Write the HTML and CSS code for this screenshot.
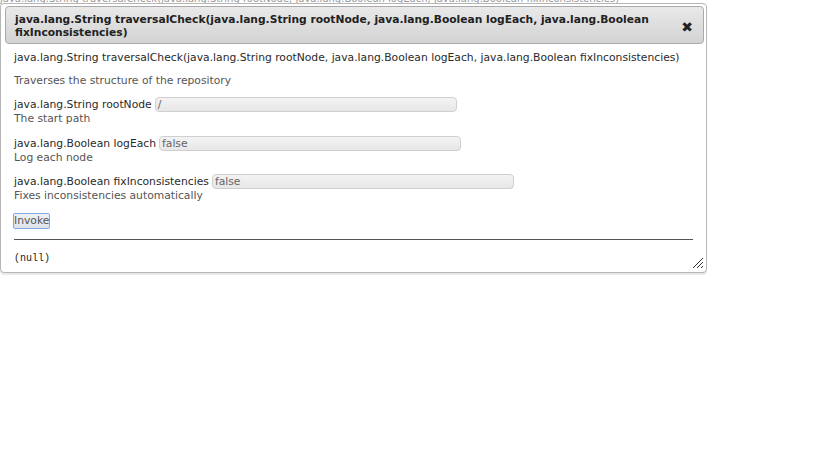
FILE: index.html
```html
<!DOCTYPE html>
<html>
<head>
<meta charset="utf-8">
<link rel="stylesheet" href="styles.css">
</head>
<body>
<p class="behind">java.lang.String traversalCheck(java.lang.String rootNode, java.lang.Boolean logEach, java.lang.Boolean fixInconsistencies)</p>
<div class="dialog">
  <div class="titlebar">
    <span class="title">java.lang.String traversalCheck(java.lang.String rootNode, java.lang.Boolean logEach, java.lang.Boolean fixInconsistencies)</span>
    <span class="close">&#x2716;</span>
  </div>
  <div class="content">
    <div class="line">java.lang.String traversalCheck(java.lang.String rootNode, java.lang.Boolean logEach, java.lang.Boolean fixInconsistencies)</div>
    <div class="line desc">Traverses the structure of the repository</div>
    <div class="param">
      <div class="prow">java.lang.String rootNode <span class="field">/</span></div>
      <div class="line desc">The start path</div>
    </div>
    <div class="param">
      <div class="prow">java.lang.Boolean logEach <span class="field">false</span></div>
      <div class="line desc">Log each node</div>
    </div>
    <div class="param last">
      <div class="prow">java.lang.Boolean fixInconsistencies <span class="field">false</span></div>
      <div class="line desc">Fixes inconsistencies automatically</div>
    </div>
    <div class="btnrow"><span class="btn">Invoke</span></div>
    <div class="rule"></div>
    <div class="result">(null)</div>
  </div>
  <svg class="grip" width="12" height="12" viewBox="0 0 12 12"><path d="M11 1 L1 11 M11 5 L5 11 M11 9 L9 11" stroke="#333" stroke-width="1" fill="none"/></svg>
</div>
</body>
</html>
```
FILE: styles.css
```css
html, body {
  margin: 0;
  padding: 0;
  background: #fff;
  overflow: hidden;
}
body {
  font-family: "DejaVu Sans", Verdana, sans-serif;
  position: relative;
  width: 819px;
  height: 460px;
}
.behind {
  margin: -6px 0 0 0;
  font-size: 10px;
  line-height: 10px;
  color: #999;
  white-space: nowrap;
}
.dialog {
  position: absolute;
  left: 0;
  top: 3px;
  width: 699px;
  height: 264px;
  border: 1px solid #b5b5b5;
  border-radius: 4px;
  background: #fff;
  padding: 2px 2px 2px 4px;
  box-shadow: 0 2px 0 #e9e9e9;
}
.titlebar {
  display: flex;
  align-items: center;
  justify-content: space-between;
  border: 1px solid #aaa;
  border-radius: 4px;
  background: linear-gradient(#e9e9e9, #d3d3d3);
  padding: 6px 10px 4px 9px;
  height: 26px;
  box-sizing: content-box;
}
.title {
  font-weight: bold;
  font-size: 10.7px;
  line-height: 13px;
  color: #222;
  width: 655px;
}
.close {
  font-size: 14px;
  color: #222;
  margin-top: 2px;
}
.content {
  display: flex;
  flex-direction: column;
  gap: 10px;
  padding: 7px 9px 0 9px;
  font-size: 10.75px;
  color: #2a2a2a;
}
.line {
  line-height: 14px;
  white-space: nowrap;
}
.content > .desc {
  margin-top: -1px;
  margin-bottom: -1px;
}
.desc {
  color: #555;
}
.param {
  display: flex;
  flex-direction: column;
}
.param.last {
  margin-top: -1px;
}
.prow {
  line-height: 15px;
  height: 15px;
  white-space: nowrap;
  display: flex;
  align-items: center;
  gap: 3px;
}
.field {
  display: inline-block;
  width: 298px;
  height: 13px;
  line-height: 13px;
  border: 1px solid #cfcfcf;
  border-radius: 4px;
  background: linear-gradient(#f3f3f3, #e7e7e7);
  color: #666;
  padding-left: 2px;
}
.btnrow {
  display: flex;
  margin-left: -1px;
}
.btn {
  display: inline-block;
  border: 1px solid #7fa9dd;
  border-radius: 2px;
  background: linear-gradient(#edf1f6, #dde3ea);
  color: #555;
  line-height: 14px;
  padding: 0;
}
.rule {
  height: 1px;
  background: #555;
  width: 679px;
}
.result {
  font-family: "Liberation Mono", "DejaVu Sans Mono", monospace;
  font-size: 10px;
  color: #222;
  line-height: 14px;
  margin-top: 2px;
}
.grip {
  position: absolute;
  right: 2px;
  bottom: 3px;
}
```
